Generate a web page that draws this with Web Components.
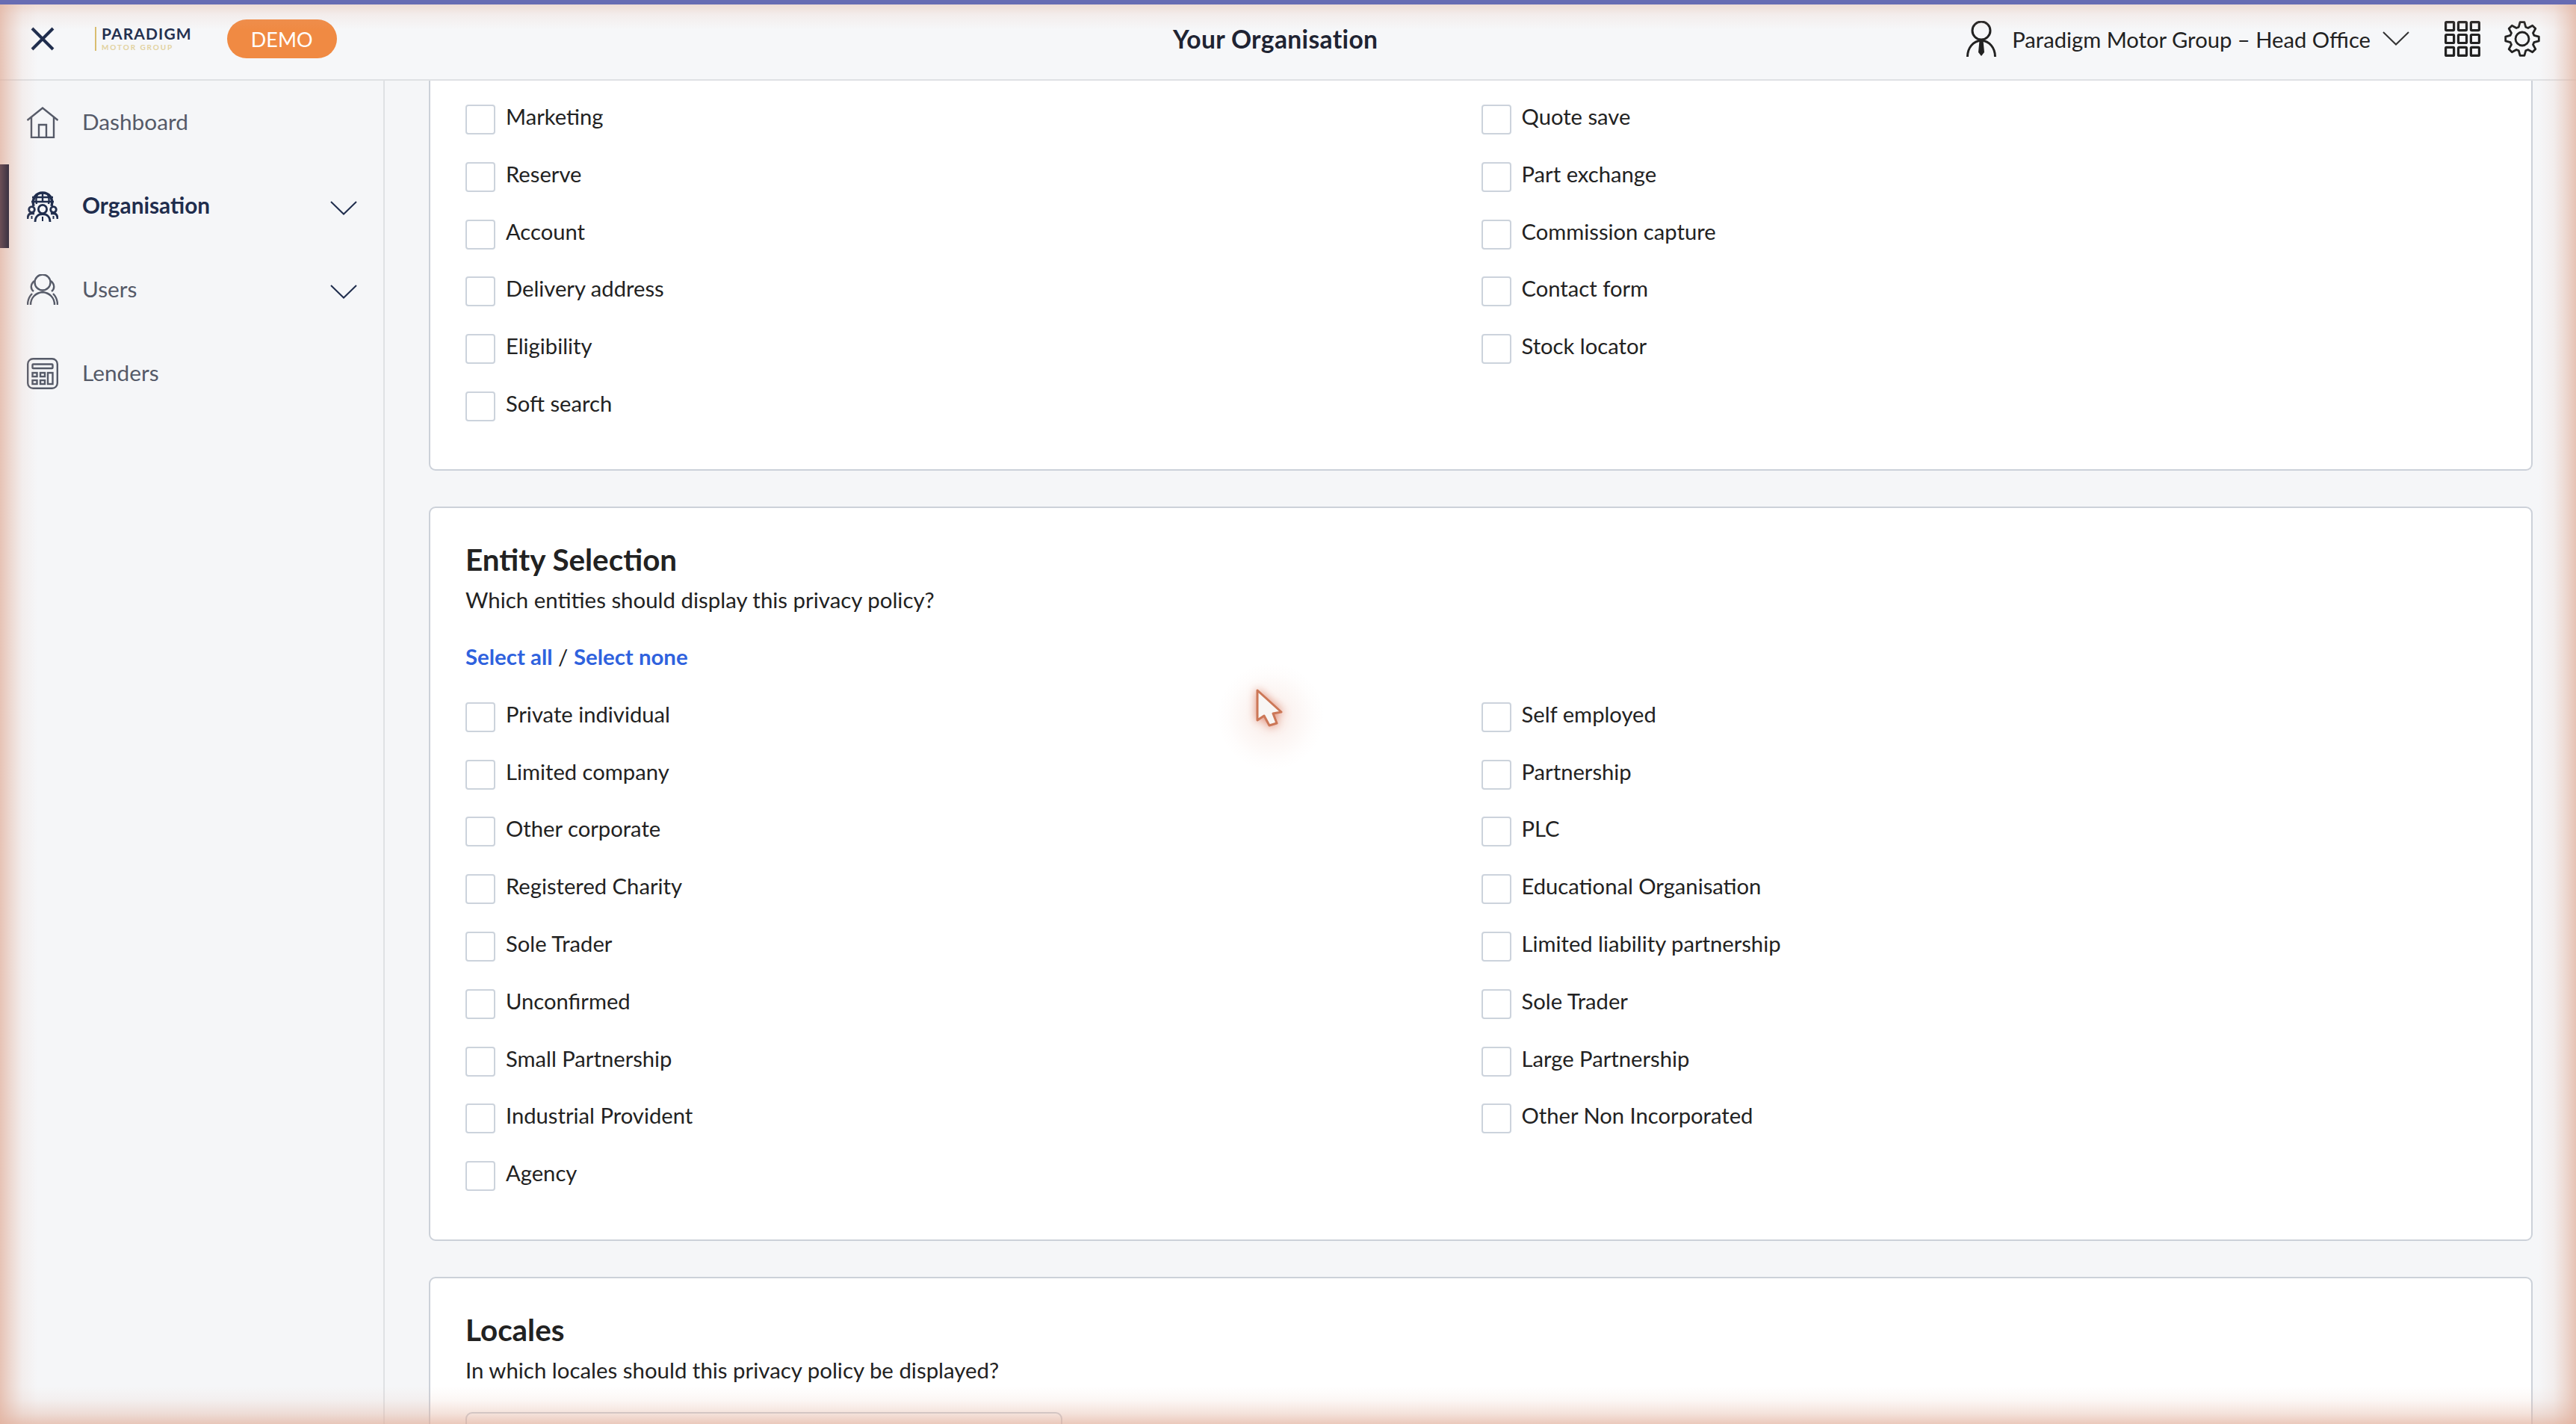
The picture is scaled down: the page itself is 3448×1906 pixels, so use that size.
<!DOCTYPE html>
<html lang="en">
<head>
<meta charset="utf-8">
<title>Your Organisation</title>
<style>
  html, body { margin: 0; height: 100%; overflow: hidden; background: #f5f6f8; }
  body { font-family: Lato, "Open Sans", sans-serif; color: #222; }
</style>
</head>
<body>
<app-shell>
  <app-header slot="header" title="Your Organisation" org="Paradigm Motor Group – Head Office"></app-header>
  <side-nav slot="nav">
    <nav-item icon="home" label="Dashboard"></nav-item>
    <nav-item icon="org" label="Organisation" active expandable></nav-item>
    <nav-item icon="users" label="Users" expandable></nav-item>
    <nav-item icon="calc" label="Lenders"></nav-item>
  </side-nav>

  <form-card continued>
    <check-grid>
      <check-field>Marketing</check-field><check-field>Quote save</check-field>
      <check-field>Reserve</check-field><check-field>Part exchange</check-field>
      <check-field>Account</check-field><check-field>Commission capture</check-field>
      <check-field>Delivery address</check-field><check-field>Contact form</check-field>
      <check-field>Eligibility</check-field><check-field>Stock locator</check-field>
      <check-field>Soft search</check-field>
    </check-grid>
  </form-card>

  <form-card heading="Entity Selection" intro="Which entities should display this privacy policy?">
    <select-links></select-links>
    <check-grid>
      <check-field>Private individual</check-field><check-field>Self employed</check-field>
      <check-field>Limited company</check-field><check-field>Partnership</check-field>
      <check-field>Other corporate</check-field><check-field>PLC</check-field>
      <check-field>Registered Charity</check-field><check-field>Educational Organisation</check-field>
      <check-field>Sole Trader</check-field><check-field>Limited liability partnership</check-field>
      <check-field>Unconfirmed</check-field><check-field>Sole Trader</check-field>
      <check-field>Small Partnership</check-field><check-field>Large Partnership</check-field>
      <check-field>Industrial Provident</check-field><check-field>Other Non Incorporated</check-field>
      <check-field>Agency</check-field>
    </check-grid>
  </form-card>

  <form-card heading="Locales" intro="In which locales should this privacy policy be displayed?">
    <locale-input></locale-input>
  </form-card>

  <mouse-pointer></mouse-pointer>
</app-shell>

<script>
  // gear outline with 8 teeth, one pointing straight up
  function gearPath(cx, cy, outer, inner) {
    const pts = [];
    for (let i = 0; i < 8; i++) {
      const a = -Math.PI / 2 + i * Math.PI / 4;
      [[-0.29, inner], [-0.13, outer], [0.13, outer], [0.29, inner]].forEach(([d, r]) => {
        pts.push((cx + r * Math.cos(a + d)).toFixed(1) + " " + (cy + r * Math.sin(a + d)).toFixed(1));
      });
    }
    return "M" + pts.join("L") + "Z";
  }

  const ICONS = {
    home: `<svg width="42" height="42" viewBox="0 0 42 42" fill="none" stroke="currentColor" stroke-width="2.4">
        <path d="M0.5 18 L21 1.5 L41.5 18"/><path d="M6 14 V41 H36 V14"/><path d="M16 41 V24 H26 V41"/></svg>`,
    org: `<svg width="42" height="42" viewBox="0 0 42 42" fill="none" stroke="currentColor" stroke-width="2.8">
        <path d="M9 21 C6 10 13 3 21 3 C29 3 36 10 33 21" stroke-width="3.4"/>
        <path d="M21 3 V15 M14 5 C12 10 12 14 13 18 M28 5 C30 10 30 14 29 18 M7 9 H35 M6 15 H36" stroke-width="2.4"/>
        <circle cx="21" cy="25" r="5.6"/><circle cx="6.5" cy="25.5" r="3.8"/><circle cx="35.5" cy="25.5" r="3.8"/>
        <path d="M11 42 C11 35 15 31.5 21 31.5 C27 31.5 31 35 31 42"/>
        <path d="M1 38 C1 33 3 30.5 7 30.5 L10 31 M41 38 C41 33 39 30.5 35 30.5 L32 31"/>
        <path d="M21 35 V41 M6.5 34 V38 M35.5 34 V38" stroke-width="2"/></svg>`,
    users: `<svg width="42" height="42" viewBox="0 0 42 42" fill="none" stroke="currentColor" stroke-width="2.4">
        <circle cx="21" cy="11" r="10.5"/>
        <path d="M10 9 C4 14 5 20 9 23 M32 9 C38 14 37 20 33 23"/>
        <path d="M5 41 C5 32 11 25 21 24 C31 25 37 32 37 41"/>
        <path d="M1 41 C1 34 3 30 7 26 M41 41 C41 34 39 30 35 26"/></svg>`,
    calc: `<svg width="42" height="42" viewBox="0 0 42 42" fill="none" stroke="currentColor" stroke-width="2.4">
        <rect x="1.2" y="1.2" width="39.6" height="39.6" rx="7"/>
        <rect x="7.5" y="8.5" width="27" height="5.5" rx="1"/>
        <rect x="7.5" y="20" width="6" height="5"/><rect x="18" y="20" width="6" height="5"/>
        <rect x="7.5" y="30" width="6" height="5"/><rect x="18" y="30" width="6" height="5"/>
        <rect x="28" y="20" width="6.5" height="15"/></svg>`,
    chevron: `<svg width="36" height="19" viewBox="0 0 36 19" fill="none" stroke="currentColor" stroke-width="2">
        <path d="M1 1 L18 17.5 L35 1"/></svg>`,
    close: `<svg width="32" height="32" viewBox="0 0 32 32" fill="none" stroke="currentColor" stroke-width="4">
        <path d="M2 2 L30 30 M30 2 L2 30"/></svg>`,
    person: `<svg width="40" height="48" viewBox="0 0 40 48" fill="none" stroke="currentColor" stroke-width="3">
        <circle cx="20" cy="13" r="12"/>
        <path d="M1.5 48 C1.5 36 9 27 20 26 C31 27 38.5 36 38.5 48"/>
        <path d="M17.5 26 H22.5 L24 42 L20 47 L16 42 Z" fill="currentColor" stroke="none"/></svg>`,
    grid: `<svg width="48" height="48" viewBox="0 0 48 48" fill="none" stroke="currentColor" stroke-width="3.2">
        ${[0, 1, 2].map(r => [0, 1, 2].map(c =>
          `<rect x="${1.6 + c * 16.9}" y="${1.6 + r * 16.9}" width="11" height="11" rx="1"/>`).join("")).join("")}</svg>`,
    gear: `<svg width="48" height="48" viewBox="0 0 48 48" fill="none" stroke="currentColor" stroke-width="2.8" stroke-linejoin="round">
        <path d="${gearPath(24, 24, 22.5, 16.5)}"/><circle cx="24" cy="24" r="9"/></svg>`
  };

  class AppShell extends HTMLElement {
    constructor() {
      super();
      this.attachShadow({ mode: "open" });
      this.shadowRoot.innerHTML = `
        <style>
          :host { display: block; position: relative; width: 100%; height: 100vh; overflow: hidden; background: #f5f6f8; }
          .strip { height: 6px; background: #676cb3; }
          .body { display: flex; height: calc(100vh - 108px); }
          main { flex: 1; min-width: 0; overflow: hidden; padding: 0 58px 0 59px; display: flex; flex-direction: column; gap: 48px; }
          .glow {
            position: absolute; z-index: 1; left: 0; right: 0; top: 6px; bottom: 0; pointer-events: none;
            background:
              linear-gradient(to right, rgba(225,175,155,.72) 0, rgba(225,175,155,.42) 14px, rgba(225,175,155,.12) 30px, transparent 50px),
              linear-gradient(to left, rgba(225,175,155,.72) 0, rgba(225,175,155,.42) 14px, rgba(225,175,155,.12) 30px, transparent 50px),
              linear-gradient(to top, rgba(225,175,155,.68) 0, rgba(225,175,155,.36) 14px, rgba(225,175,155,.1) 32px, transparent 50px),
              linear-gradient(to bottom, rgba(225,175,155,.38) 0, rgba(225,175,155,.14) 14px, transparent 34px);
          }
        </style>
        <div class="strip"></div>
        <slot name="header"></slot>
        <div class="body">
          <slot name="nav"></slot>
          <main><slot></slot></main>
        </div>
        <div class="glow"></div>
      `;
    }
  }

  class AppHeader extends HTMLElement {
    constructor() {
      super();
      this.attachShadow({ mode: "open" });
    }

    connectedCallback() {
      this.shadowRoot.innerHTML = `
        <style>
          :host {
            display: grid; grid-template-columns: 1570px auto 1fr; align-items: center;
            box-sizing: border-box; height: 102px; padding-bottom: 8px;
            background: #f6f7f9; border-bottom: 2px solid #dfe1e4;
          }
          .left { display: flex; align-items: center; padding-left: 41px; }
          .close { display: flex; color: #1f2d4d; margin-right: 54px; }
          .logo { display: flex; align-items: stretch; gap: 7px; margin-right: 47px; }
          .logo i { width: 2px; background: #d9bd6f; margin: 1px 0; }
          .logo b { display: block; font-size: 21px; line-height: 20px; font-weight: 700; color: #24304f; letter-spacing: 1.1px; }
          .logo small { display: block; font-size: 10px; line-height: 11px; margin-top: 3px; font-weight: 700; color: #e2d29f; letter-spacing: 1.9px; }
          .demo {
            display: flex; align-items: center; justify-content: center;
            width: 147px; height: 52px; border-radius: 26px;
            background: #f08a43; color: #fff; font-size: 27px;
          }
          .title { font-size: 33.6px; font-weight: 700; color: #1f2433; letter-spacing: .35px; white-space: nowrap; }
          .right { display: flex; align-items: center; justify-content: flex-end; padding-right: 48px; color: #222; }
          .org { font-size: 29.2px; margin: 0 16px 0 21px; white-space: nowrap; }
          .person, .grid, .gear, .chev { display: flex; }
          .chev { margin-right: 47px; color: #333; margin-top: -2px; }
          .gear { margin-left: 32px; }
        </style>
        <div class="left">
          <span class="close">${ICONS.close}</span>
          <div class="logo"><i></i><div><b>PARADIGM</b><small>MOTOR GROUP</small></div></div>
          <span class="demo">DEMO</span>
        </div>
        <div class="title">${this.getAttribute("title")}</div>
        <div class="right">
          <span class="person">${ICONS.person}</span>
          <span class="org">${this.getAttribute("org")}</span>
          <span class="chev">${ICONS.chevron}</span>
          <span class="grid">${ICONS.grid}</span>
          <span class="gear">${ICONS.gear}</span>
        </div>
      `;
    }
  }

  class SideNav extends HTMLElement {
    constructor() {
      super();
      this.attachShadow({ mode: "open" });
      this.shadowRoot.innerHTML = `
        <style>
          :host { display: block; flex: none; box-sizing: border-box; width: 515px; height: 100%; background: #f5f6f8; border-right: 2px solid #dfe1e4; }
        </style>
        <slot></slot>
      `;
    }
  }

  class NavItem extends HTMLElement {
    constructor() {
      super();
      this.attachShadow({ mode: "open" });
    }

    connectedCallback() {
      const active = this.hasAttribute("active");
      this.shadowRoot.innerHTML = `
        <style>
          :host {
            display: flex; position: relative; align-items: center; box-sizing: border-box; height: 112px;
            padding-left: 36px; color: ${active ? "#1f2d4d" : "#555a68"};
          }
          /* the active marker sits above the window glow */
          :host([active])::before {
            content: ""; position: absolute; z-index: 2; left: 0; top: 0; bottom: 0; width: 12px;
            background: linear-gradient(to right, #6c4f56, #3a3242);
          }
          .icon { display: flex; width: 42px; height: 42px; }
          .label { font-size: 29.8px; line-height: 36px; margin: -2px 0 0 32px; flex: 1; font-weight: ${active ? 700 : 400}; }
          .chev { display: flex; margin: 4px 35px 0 0; color: #1f2d4d; }
        </style>
        <span class="icon">${ICONS[this.getAttribute("icon")]}</span>
        <span class="label">${this.getAttribute("label")}</span>
        ${this.hasAttribute("expandable") ? `<span class="chev">${ICONS.chevron}</span>` : ""}
      `;
    }
  }

  class FormCard extends HTMLElement {
    constructor() {
      super();
      this.attachShadow({ mode: "open" });
    }

    connectedCallback() {
      const heading = this.getAttribute("heading");
      const intro = this.getAttribute("intro");
      this.shadowRoot.innerHTML = `
        <style>
          :host {
            display: block; flex: none; box-sizing: border-box; background: #fff;
            border: 2.5px solid #ccd1d9; border-radius: 9px; padding: 47px 46px 28px 47px;
          }
          :host([continued]) { border-top: 0; border-radius: 0 0 9px 9px; padding-top: 32px; padding-bottom: 27px; }
          h2 { margin: 0 0 12px; font-size: 40.4px; line-height: 44px; font-weight: 700; color: #222; }
          p { margin: 0; font-size: 29.4px; line-height: 40px; color: #222; }
        </style>
        ${heading ? `<h2>${heading}</h2>` : ""}
        ${intro ? `<p>${intro}</p>` : ""}
        <slot></slot>
      `;
    }
  }

  class CheckGrid extends HTMLElement {
    constructor() {
      super();
      this.attachShadow({ mode: "open" });
      this.shadowRoot.innerHTML = `
        <style>
          :host { display: grid; grid-template-columns: 1fr 1fr; grid-auto-rows: 76.8px; }
        </style>
        <slot></slot>
      `;
    }
  }

  class CheckField extends HTMLElement {
    constructor() {
      super();
      this.attachShadow({ mode: "open" });
      this.shadowRoot.innerHTML = `
        <style>
          :host { display: flex; align-items: flex-start; gap: 14px; font-size: 29.2px; line-height: 32px; color: #222; }
          .box { flex: none; box-sizing: border-box; width: 40px; height: 40px; background: #fff; border: 2.5px solid #ccd3dc; border-radius: 4px; }
        </style>
        <span class="box"></span>
        <span><slot></slot></span>
      `;
    }
  }

  class SelectLinks extends HTMLElement {
    constructor() {
      super();
      this.attachShadow({ mode: "open" });
      this.shadowRoot.innerHTML = `
        <style>
          :host { display: block; margin: 36px 0 41px; font-size: 29.4px; line-height: 40px; color: #222; }
          a { color: #2f62de; font-weight: 700; text-decoration: none; }
        </style>
        <a href="#">Select all</a> / <a href="#">Select none</a>
      `;
    }
  }

  class LocaleInput extends HTMLElement {
    constructor() {
      super();
      this.attachShadow({ mode: "open" });
      this.shadowRoot.innerHTML = `
        <style>
          :host { display: block; box-sizing: border-box; width: 799px; height: 60px; margin-top: 36px; background: #fff; border: 2.5px solid #ccd1d9; border-radius: 9px; }
        </style>
      `;
    }
  }

  class MousePointer extends HTMLElement {
    constructor() {
      super();
      this.attachShadow({ mode: "open" });
      this.shadowRoot.innerHTML = `
        <style>
          :host { position: absolute; z-index: 2; left: 1626px; top: 884px; width: 150px; height: 150px; pointer-events: none;
            background: radial-gradient(circle at 50% 50%, rgba(215,120,90,.2) 0, rgba(215,120,90,.08) 28%, rgba(215,120,90,.015) 55%, transparent 68%); }
          svg { position: absolute; left: 56px; top: 39px; overflow: visible; filter: drop-shadow(0 0 6px rgba(215,110,80,.75)); }
        </style>
        <svg width="40" height="52" viewBox="0 0 40 52">
          <path d="M1 1 L33 30 L22 32 L27 45 L17 48 L10 35 L1 41 Z" fill="#f8f6f4" stroke="#cc7757" stroke-width="3" stroke-linejoin="round"/>
        </svg>
      `;
    }
  }

  customElements.define("app-shell", AppShell);
  customElements.define("app-header", AppHeader);
  customElements.define("side-nav", SideNav);
  customElements.define("nav-item", NavItem);
  customElements.define("form-card", FormCard);
  customElements.define("check-grid", CheckGrid);
  customElements.define("check-field", CheckField);
  customElements.define("select-links", SelectLinks);
  customElements.define("locale-input", LocaleInput);
  customElements.define("mouse-pointer", MousePointer);
</script>
</body>
</html>
